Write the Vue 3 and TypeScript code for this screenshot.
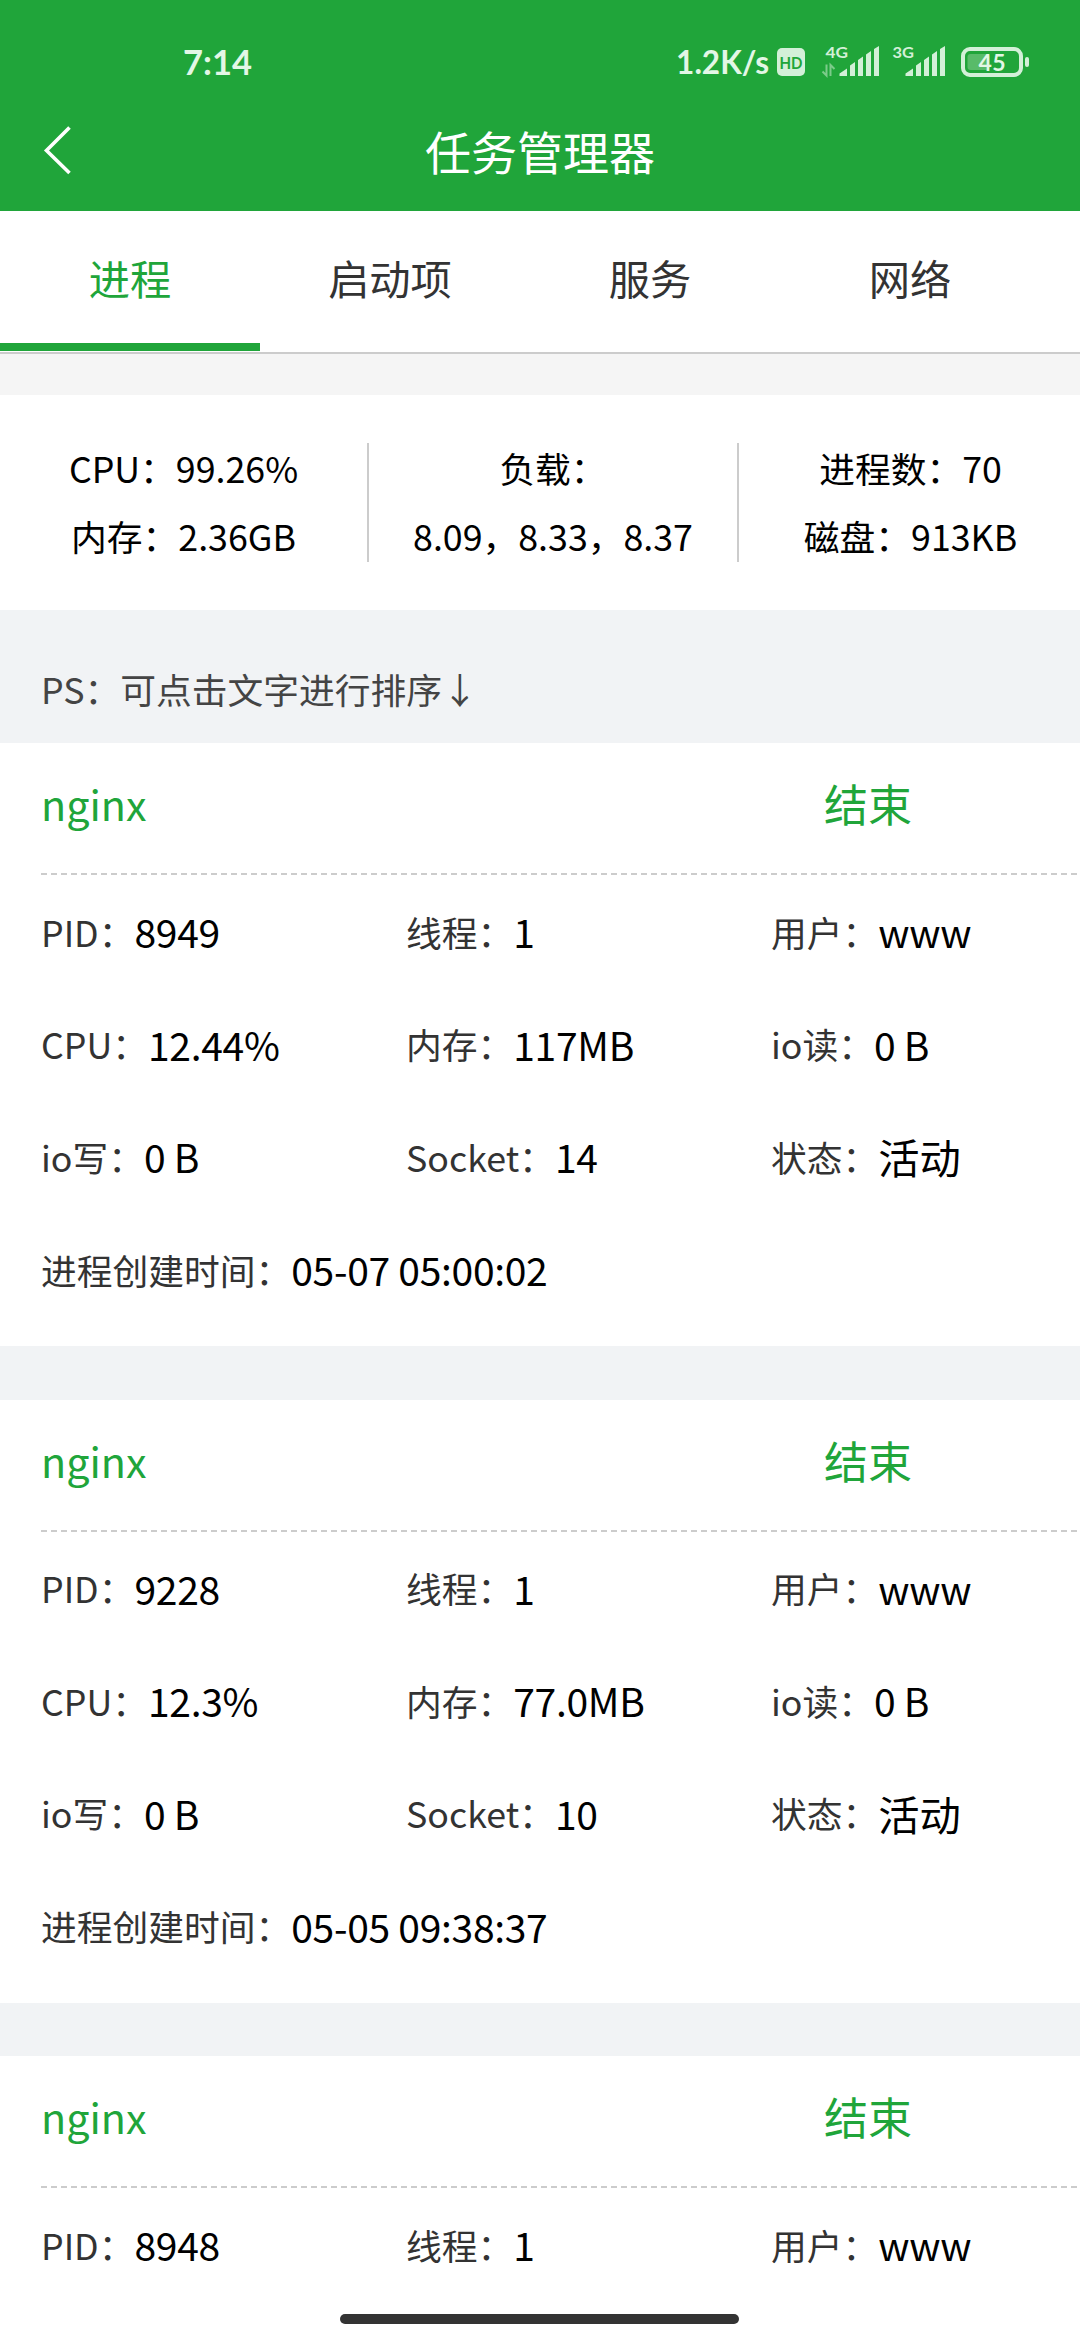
<script setup lang="ts">
interface Field {
  label: string
  value: string
  wide?: boolean
  han?: boolean
}
interface Process {
  name: string
  fields: Field[]
}

const tabs: string[] = ['进程', '启动项', '服务', '网络']
const activeTab = 0

const stats: string[][] = [
  ['CPU：99.26%', '内存：2.36GB'],
  ['负载：', '8.09，8.33，8.37'],
  ['进程数：70', '磁盘：913KB'],
]

function makeProcess(pid: string, cpu: string, memory: string, sockets: string, created: string): Process {
  return {
    name: 'nginx',
    fields: [
      { label: 'PID', value: pid },
      { label: '线程', value: '1' },
      { label: '用户', value: 'www' },
      { label: 'CPU', value: cpu },
      { label: '内存', value: memory },
      { label: 'io读', value: '0 B' },
      { label: 'io写', value: '0 B' },
      { label: 'Socket', value: sockets },
      { label: '状态', value: '活动', han: true },
      { label: '进程创建时间', value: created, wide: true },
    ],
  }
}

const processes: Process[] = [
  makeProcess('8949', '12.44%', '117MB', '14', '05-07 05:00:02'),
  makeProcess('9228', '12.3%', '77.0MB', '10', '05-05 09:38:37'),
  { name: 'nginx', fields: makeProcess('8948', '', '', '', '').fields.slice(0, 3) },
]

const signalBars =
  'M17.500 32v-2.500l7.500-5V32zM28 32V21.500l5-3.500v14zM36 32V16l5-3.500V32zM44 32V10.500l5-3.500v25zM52 32V5l5-3v30z'
</script>

<template>
  <div class="screen">
    <header class="top">
      <div class="status">
        <span class="clock">7:14</span>
        <div class="indicators">
          <span class="speed">1.2K/s</span>
          <svg class="hd" width="28" height="28" viewBox="0 0 28 28">
            <rect width="28" height="28" rx="5" fill="#d3f0d8" />
            <text x="2.500" y="20.500" textLength="23" lengthAdjust="spacingAndGlyphs" class="hd-text">HD</text>
          </svg>
          <svg class="sim first" width="58" height="34" viewBox="0 0 58 34">
            <text x="3.500" y="13.500" class="net" textLength="22.500" lengthAdjust="spacingAndGlyphs">4G</text>
            <path d="M4.500 20.500v11L.5 27.500M8.500 32V21l4 4" fill="none" stroke="#7ccb8a" stroke-width="2" />
            <path :d="signalBars" fill="#d3f0d8" />
          </svg>
          <svg class="sim second" width="58" height="34" viewBox="0 0 58 34">
            <text x="4.500" y="13.500" class="net" textLength="21.500" lengthAdjust="spacingAndGlyphs">3G</text>
            <path :d="signalBars" fill="#d3f0d8" />
          </svg>
          <svg class="battery" width="70" height="32" viewBox="0 0 70 32">
            <rect x="3" y="3" width="58" height="26" rx="7" fill="none" stroke="#d3f0d8" stroke-width="4" />
            <rect x="7.500" y="8" width="22" height="16" rx="3" fill="#58bb69" />
            <rect x="65" y="11" width="4" height="10" rx="2" fill="#d3f0d8" />
            <text x="18.500" y="25" class="level" textLength="27">45</text>
          </svg>
        </div>
      </div>
      <div class="nav">
        <svg class="back" width="30" height="52" viewBox="0 0 30 52">
          <path d="M26.500 3.500 3.500 26.500l23 22.500" fill="none" stroke="#fff" stroke-width="3.600" />
        </svg>
        <h1>任务管理器</h1>
      </div>
    </header>

    <nav class="tabs">
      <div v-for="(tab, i) in tabs" :key="tab" class="tab" :class="{ active: i === activeTab }">{{ tab }}</div>
    </nav>

    <section class="stats">
      <div v-for="(lines, i) in stats" :key="i" class="stat">
        <div v-for="line in lines" :key="line" class="line">{{ line }}</div>
      </div>
    </section>

    <div class="hint">PS：可点击文字进行排序↓</div>

    <main class="list">
      <article v-for="(proc, i) in processes" :key="i" class="card">
        <div class="head">
          <span class="name">{{ proc.name }}</span>
          <span class="kill">结束</span>
        </div>
        <div class="rule"></div>
        <div class="fields">
          <div v-for="f in proc.fields" :key="f.label" class="field" :class="{ wide: f.wide }">
            <span class="label">{{ f.label }}：</span><span class="value" :class="{ han: f.han }">{{ f.value }}</span>
          </div>
        </div>
      </article>
    </main>

    <div class="home-bar"></div>
  </div>
</template>

<style>
body {
  margin: 0;
  overflow: hidden;
}
</style>

<style scoped>
.screen {
  position: relative;
  width: 1080px;
  height: 2340px;
  overflow: hidden;
  background: #f1f3f5;
  color: #000;
  font-family: "Noto Sans CJK SC", sans-serif;
  font-weight: 400;
}
.top {
  height: 211px;
  background: #20a53a;
  color: #fff;
}
.status {
  height: 92px;
  padding: 35px 50px 0 183px;
  box-sizing: border-box;
  display: flex;
  justify-content: space-between;
  font-family: Lato, sans-serif;
  font-weight: 700;
  color: #e3f7e6;
}
.status svg {
  flex: none;
  overflow: visible;
}
.clock {
  font-size: 34.500px;
  line-height: 54px;
}
.indicators {
  display: flex;
  align-items: flex-start;
}
.speed {
  font-size: 31.500px;
  line-height: 54px;
  margin-right: 8px;
  white-space: nowrap;
}
.hd {
  margin-top: 13px;
}
.hd-text {
  font-size: 17px;
  fill: #20a53a;
}
.sim {
  margin-top: 9px;
}
.first {
  margin-left: 17px;
}
.second {
  margin-left: 8px;
}
.net {
  font-size: 16px;
  fill: #d3f0d8;
}
.battery {
  margin: 11px 0 0 14px;
}
.level {
  font-size: 23px;
  fill: #e3f7e6;
}
.nav {
  height: 115px;
  display: flex;
  align-items: center;
  padding: 0 43px;
}
.back {
  flex: none;
}
h1 {
  flex: 1;
  margin: 0 30px 0 0;
  text-align: center;
  font-size: 46px;
  line-height: 60px;
  font-weight: 400;
}
.tabs {
  display: flex;
  height: 143px;
  box-sizing: border-box;
  border-bottom: 2px solid #ccc;
  background: #fff;
}
.tab {
  width: 260px;
  height: 140px;
  box-sizing: border-box;
  border-bottom: 8px solid transparent;
  text-align: center;
  font-size: 41.250px;
  line-height: 133px;
  color: #333;
}
.tab.active {
  color: #20a53a;
  border-bottom-color: #20a53a;
}
.stats {
  display: flex;
  align-items: center;
  height: 256px;
  box-sizing: border-box;
  border-top: 41px solid #f5f5f5;
  background: #fff;
}
.stat {
  display: flex;
  flex-direction: column;
  justify-content: center;
  width: 369px;
  height: 119px;
  box-sizing: border-box;
  flex: none;
  border-right: 2px solid #ccc;
  text-align: center;
  font-size: 35.750px;
}
.stat:nth-child(2) {
  width: 370px;
}
.stat:last-child {
  width: 343px;
  border-right: 0;
}
.line {
  flex: none;
  height: 68px;
  line-height: 66px;
}
.hint {
  height: 133px;
  box-sizing: border-box;
  padding: 44px 0 0 41px;
  font-size: 35.750px;
  line-height: 70px;
  color: #444;
}
.card {
  height: 603px;
  margin-bottom: 53.500px;
  background: #fff;
  overflow: hidden;
}
.head {
  height: 130px;
  padding-bottom: 10px;
  box-sizing: border-box;
  display: flex;
  align-items: center;
  font-size: 44px;
  color: #20a53a;
}
.name {
  width: 783px;
  padding-left: 41px;
  box-sizing: border-box;
  font-size: 41.250px;
}
.kill {
  padding-left: 41px;
}
.rule {
  height: 2px;
  margin-left: 41px;
  background: repeating-linear-gradient(90deg, #ccc 0 6px, transparent 6px 10px);
}
.fields {
  display: grid;
  grid-template-columns: 365px 365px 1fr;
  grid-auto-rows: 112.600px;
  padding-left: 41px;
}
.field {
  display: flex;
  align-items: center;
  white-space: nowrap;
}
.wide {
  grid-column: 1 / -1;
}
.label {
  font-size: 35.750px;
  color: #333;
}
.value {
  font-size: 39px;
  letter-spacing: -0.300px;
}
.value.han {
  font-size: 41.250px;
  letter-spacing: 0;
}
.home-bar {
  position: absolute;
  left: 340px;
  bottom: 16px;
  width: 399px;
  height: 10px;
  border-radius: 5px;
  background: #333;
}
</style>
